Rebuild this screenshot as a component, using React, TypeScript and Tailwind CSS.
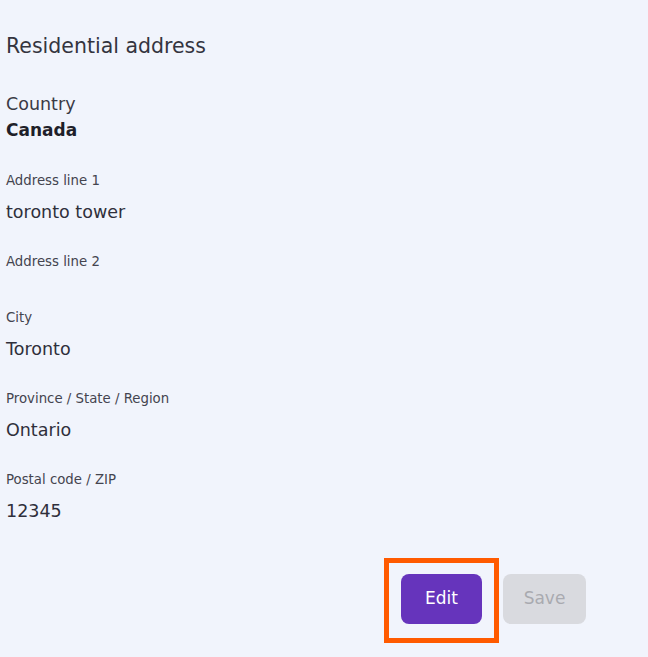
const fields = [
  { label: "Address line 1", value: "toronto tower" },
  { label: "Address line 2", value: "" },
  { label: "City", value: "Toronto" },
  { label: "Province / State / Region", value: "Ontario" },
  { label: "Postal code / ZIP", value: "12345" },
];

const App = () => {
  return (
    <div
      className="min-h-screen bg-[#f1f4fc] text-[#2f2f3b]"
      style={{ fontFamily: '"DejaVu Sans", "Open Sans", sans-serif' }}
    >
      <div className="pl-[6px] pt-[32px]">
        <h2 className="text-[20.5px] leading-[28px] text-[#34343f]">Residential address</h2>

        {/* Country */}
        <div className="mt-[32px]">
          <div className="text-[17.5px] leading-[24px] text-[#3a3a46]">Country</div>
          <div className="mt-[1px] text-[17px] leading-[26px] font-semibold text-[#1f1f2a]">Canada</div>
        </div>

        {/* Address fields */}
        <div className="mt-[29px] flex flex-col">
          {fields.map((f) => (
            <div key={f.label} className={f.value ? "h-[81px] last:h-auto" : "h-[56px]"}>
              <div className="text-[13.3px] leading-[18px] text-[#44444f]">{f.label}</div>
              {f.value ? (
                <div className="mt-[10px] text-[17.5px] leading-[24px] text-[#2f2f3b]">{f.value}</div>
              ) : null}
            </div>
          ))}
        </div>
      </div>

      {/* Actions */}
      <div className="flex justify-end gap-[21px] pr-[62px] mt-[51px]">
        <div className="border-[5px] border-[#ff5a00] px-[12px] pt-[11px] pb-[14px] -ml-[17px] -mr-[17px] -mt-[16px] -mb-[19px]">
          <button className="w-[81px] h-[50px] rounded-[8px] bg-[#6634bc] text-white text-[17px] font-medium">
            Edit
          </button>
        </div>
        <button
          disabled
          className="w-[83px] h-[50px] rounded-[8px] bg-[#d9dadf] text-[#a9aab0] text-[17px]"
        >
          Save
        </button>
      </div>
    </div>
  );
};

export default App;
